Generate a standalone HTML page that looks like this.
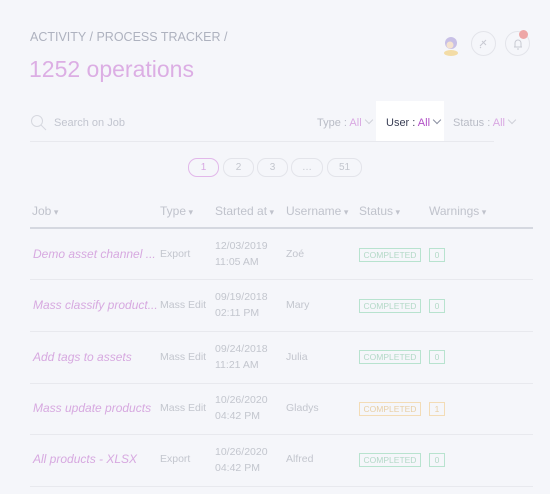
<!DOCTYPE html>
<html><head><style>
body{margin:0;width:550px;height:494px;background:#f5f6fa;font-family:"Liberation Sans",sans-serif;position:relative;overflow:hidden;color:#b9bcc6}
.a{position:absolute;white-space:nowrap}
.bc{left:30px;top:30px;font-size:12.5px;color:#aeb2bf}
.h1{left:29px;top:56px;font-size:23px;color:#dcaee4}
.ic{width:23px;height:23px;border:1px solid #e3e4ea;border-radius:50%;top:31px}
.srch{left:54px;top:117px;font-size:11px;color:#c2c5cf}
.flt{font-size:11px;top:117px;color:#b9bcc6}
.flt b{font-weight:normal;color:#d9a8e2}
.cv{display:inline-block;width:5px;height:5px;border-right:1px solid #cfd1d8;border-bottom:1px solid #cfd1d8;transform:rotate(45deg);margin-left:4px;position:relative;top:-3px}
.pg{top:158px;height:17px;border:1px solid #e3e4ea;border-radius:9px;font-size:10px;text-align:center;line-height:17px;color:#c3c6ce}
.th{top:204px;font-size:12px;color:#c0c3cc}
.th:after{content:" ▾";font-size:9px}
.row{left:30px;width:503px;height:1px;background:#e8e9ee}
.job{left:33px;font-size:12px;font-style:italic;color:#d7a9e0}
.t{font-size:10.5px;color:#c3c6ce}
.d{font-size:10.5px;color:#c3c6ce;line-height:16px}
.st{left:359px;width:60px;height:12px;border:1px solid #b8e3cf;font-size:8.5px;text-align:center;line-height:12px;color:#b3d9c7}
.w{left:429px;width:14px;height:12px;border:1px solid #b8e3cf;font-size:8.5px;text-align:center;line-height:12px;color:#b3d9c7}
.y{border-color:#f3dcb6!important;color:#e8cfa4!important}
</style></head><body>
<div class="a bc">ACTIVITY / PROCESS TRACKER /</div>
<div class="a h1">1252 operations</div>
<div class="a" style="left:442px;top:33px;width:16px;height:22px">
<svg width="18" height="24" viewBox="0 0 18 24"><ellipse cx="9" cy="20" rx="7" ry="3" fill="#f3dca6"/><circle cx="9" cy="10" r="6" fill="#c8c0e6"/><circle cx="8" cy="12" r="3.5" fill="#f5e3cf"/></svg></div>
<div class="a ic" style="left:471px"><svg width="23" height="23"><path d="M8 14l6-6M10 9l4 4M9 15l-1 1" stroke="#c8cad2" fill="none"/></svg></div>
<div class="a ic" style="left:505px"><svg width="23" height="23"><path d="M8 15h8M9 15v-4a3 3 0 0 1 6 0v4M11 17h2" stroke="#c8cad2" fill="none"/></svg></div>
<div class="a" style="left:519px;top:30px;width:9px;height:9px;border-radius:50%;background:#eea7a7"></div>
<svg class="a" style="left:30px;top:114px" width="18" height="18"><circle cx="7" cy="7" r="5.5" stroke="#d6d8df" fill="none"/><path d="M11 11l5 5" stroke="#d6d8df"/></svg>
<div class="a srch">Search on Job</div>
<div class="a flt" style="left:317px">Type : <b>All</b><span class="cv"></span></div>
<div class="a" style="left:376px;top:101px;width:68px;height:40px;background:#fff"></div>
<div class="a flt" style="left:386px;color:#3a3f55">User : <b style="color:#b14fc6">All</b><span class="cv" style="border-color:#8a8ea0"></span></div>
<div class="a flt" style="left:453px">Status : <b>All</b><span class="cv"></span></div>
<div class="a" style="left:30px;top:141px;width:464px;height:1px;background:#e8e9ee"></div>
<div class="a pg" style="left:188px;width:29px;border-color:#e2b8ea;color:#d8a8e2">1</div>
<div class="a pg" style="left:223px;width:29px">2</div>
<div class="a pg" style="left:257px;width:29px">3</div>
<div class="a pg" style="left:291px;width:30px">…</div>
<div class="a pg" style="left:327px;width:33px">51</div>
<div class="a th" style="left:32px">Job</div>
<div class="a th" style="left:160px">Type</div>
<div class="a th" style="left:215px">Started at</div>
<div class="a th" style="left:286px">Username</div>
<div class="a th" style="left:359px">Status</div>
<div class="a th" style="left:429px">Warnings</div>
<div class="a row" style="top:227px;height:2px;background:#d5d8e0"></div>

<div class="a job" style="top:247px">Demo asset channel ...</div>
<div class="a t" style="left:160px;top:248px">Export</div>
<div class="a d" style="left:215px;top:238px">12/03/2019<br>11:05 AM</div>
<div class="a t" style="left:286px;top:248px">Zoé</div>
<div class="a st" style="top:248px">COMPLETED</div><div class="a w" style="top:248px">0</div>
<div class="a row" style="top:279px"></div>

<div class="a job" style="top:298px">Mass classify product...</div>
<div class="a t" style="left:160px;top:299px">Mass Edit</div>
<div class="a d" style="left:215px;top:289px">09/19/2018<br>02:11 PM</div>
<div class="a t" style="left:286px;top:299px">Mary</div>
<div class="a st" style="top:299px">COMPLETED</div><div class="a w" style="top:299px">0</div>
<div class="a row" style="top:331px"></div>

<div class="a job" style="top:350px">Add tags to assets</div>
<div class="a t" style="left:160px;top:351px">Mass Edit</div>
<div class="a d" style="left:215px;top:341px">09/24/2018<br>11:21 AM</div>
<div class="a t" style="left:286px;top:351px">Julia</div>
<div class="a st" style="top:350px">COMPLETED</div><div class="a w" style="top:350px">0</div>
<div class="a row" style="top:383px"></div>

<div class="a job" style="top:401px">Mass update products</div>
<div class="a t" style="left:160px;top:402px">Mass Edit</div>
<div class="a d" style="left:215px;top:392px">10/26/2020<br>04:42 PM</div>
<div class="a t" style="left:286px;top:402px">Gladys</div>
<div class="a st y" style="top:402px">COMPLETED</div><div class="a w y" style="top:402px">1</div>
<div class="a row" style="top:434px"></div>

<div class="a job" style="top:452px">All products - XLSX</div>
<div class="a t" style="left:160px;top:453px">Export</div>
<div class="a d" style="left:215px;top:444px">10/26/2020<br>04:42 PM</div>
<div class="a t" style="left:286px;top:453px">Alfred</div>
<div class="a st" style="top:453px">COMPLETED</div><div class="a w" style="top:453px">0</div>
<div class="a row" style="top:486px"></div>
</body></html>
